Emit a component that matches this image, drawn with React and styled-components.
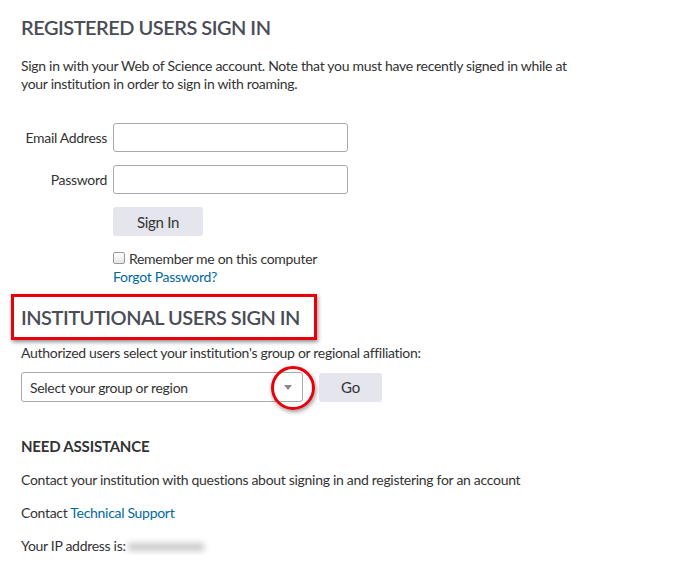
import React from "react";
import styled, { createGlobalStyle } from "styled-components";

const Global = createGlobalStyle`
  body {
    margin: 0;
    background: #ffffff;
    font-family: Lato, "Open Sans", sans-serif;
    color: #333333;
  }
`;

const Page = styled.div`
  padding: 13px 0 0 21px;
  font-size: 14px;
  letter-spacing: -0.3px;
`;

const Heading = styled.h2`
  margin: 0;
  font-size: 20px;
  font-weight: 600;
  color: #4a4d55;
  line-height: 28px;
  letter-spacing: -0.5px;
`;

const HeadingBox = styled.div`
  display: inline-block;
  margin: 9px 0 0 -10px;
  padding: 6px 14px 6px 7px;
  border: 3px solid #e8000b;
  box-shadow: 1px 2px 4px rgba(0, 0, 0, 0.45);
`;

const Text = styled.p`
  margin: ${(p) => p.$m || "0"};
  line-height: 18px;
  max-width: ${(p) => p.$w || "none"};
`;

const Form = styled.div`
  display: grid;
  grid-template-columns: 86px 235px;
  column-gap: 6px;
  row-gap: 13px;
  margin: 30px 0 0 0;
  align-items: center;
`;

const Label = styled.label`
  text-align: right;
  white-space: nowrap;
`;

const Input = styled.input`
  box-sizing: border-box;
  width: 235px;
  height: 29px;
  border: 1px solid #a9a9a9;
  border-radius: 3px;
`;

const Button = styled.button`
  height: 29px;
  width: ${(p) => p.$w};
  border: none;
  border-radius: 3px;
  background: #e4e5ed;
  color: #333;
  font-family: inherit;
  font-size: 15px;
  letter-spacing: -0.3px;
  padding: 0;
`;

const Options = styled.div`
  grid-column: 2;
  display: flex;
  flex-direction: column;
  margin-top: -1px;
`;

const Check = styled.label`
  display: flex;
  align-items: center;
  gap: 4px;
  height: 20px;
`;

const Box = styled.span`
  box-sizing: border-box;
  width: 12px;
  height: 12px;
  border: 1px solid #999;
  border-radius: 2px;
  background: linear-gradient(#fdfdfd, #e6e6e6);
`;

const Link = styled.a`
  color: #006a9e;
  text-decoration: none;
`;

const SelectRow = styled.div`
  display: flex;
  align-items: center;
  gap: 16px;
  margin-top: 10px;
`;

const SelectWrap = styled.div`
  position: relative;
`;

const Select = styled.div`
  box-sizing: border-box;
  width: 282px;
  height: 30px;
  border: 1px solid #a9a9a9;
  border-radius: 3px;
  display: flex;
  align-items: center;
  justify-content: space-between;
  padding: 0 7px 0 8px;
`;

const Arrow = styled.span`
  width: 0;
  height: 0;
  border-left: 4px solid transparent;
  border-right: 4px solid transparent;
  border-top: 5px solid #888;
  margin-right: 3px;
`;

const Circle = styled.span`
  position: absolute;
  left: 250px;
  top: -6px;
  width: 38px;
  height: 38px;
  border: 3px solid #e8000b;
  border-radius: 50%;
  box-shadow: 1px 2px 4px rgba(0, 0, 0, 0.4);
`;

const SubHeading = styled.h3`
  margin: 35px 0 0 0;
  font-size: 15px;
  font-weight: 700;
  color: #333;
  line-height: 18px;
  letter-spacing: -0.2px;
`;

const Blur = styled.span`
  display: inline-block;
  width: 76px;
  height: 8px;
  margin-left: 2px;
  vertical-align: middle;
  background: #c9c9c9;
  filter: blur(3px);
`;

export default function App() {
  return (
    <Page>
      <Global />
      <Heading>REGISTERED USERS SIGN IN</Heading>
      <Text $m="16px 0 0 0" $w="560px">
        Sign in with your Web of Science account. Note that you must have recently signed in while at your institution in order to sign in with roaming.
      </Text>
      <Form>
        <Label>Email Address</Label>
        <Input />
        <Label>Password</Label>
        <Input type="password" />
        <span />
        <Button $w="90px">Sign In</Button>
        <Options>
          <Check>
            <Box />
            Remember me on this computer
          </Check>
          <Link>Forgot Password?</Link>
        </Options>
      </Form>
      <HeadingBox>
        <Heading>INSTITUTIONAL USERS SIGN IN</Heading>
      </HeadingBox>
      <Text $m="4px 0 0 0">Authorized users select your institution's group or regional affiliation:</Text>
      <SelectRow>
        <SelectWrap>
          <Select>
            Select your group or region
            <Arrow />
          </Select>
          <Circle />
        </SelectWrap>
        <Button $w="63px">Go</Button>
      </SelectRow>
      <SubHeading>NEED ASSISTANCE</SubHeading>
      <Text $m="16px 0 0 0">Contact your institution with questions about signing in and registering for an account</Text>
      <Text $m="15px 0 0 0">
        Contact <Link>Technical Support</Link>
      </Text>
      <Text $m="15px 0 0 0">
        Your IP address is:<Blur />
      </Text>
    </Page>
  );
}
